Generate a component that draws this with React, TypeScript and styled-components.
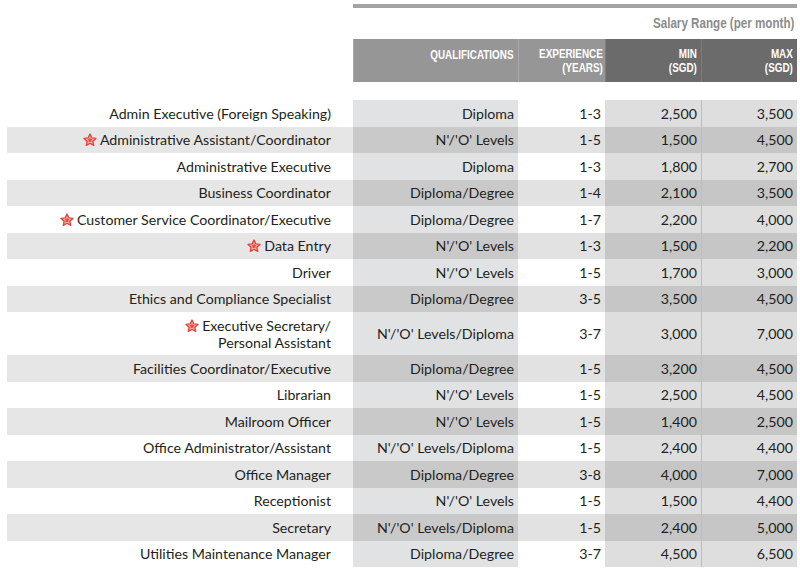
import React from "react";
import styled, { createGlobalStyle } from "styled-components";

const GlobalStyle = createGlobalStyle`
  html, body {
    margin: 0;
    padding: 0;
    background: #ffffff;
  }
  body {
    font-family: "Lato", "Noto Sans", sans-serif;
    color: #231f20;
  }
`;

const COLS = "346px 165px 87px 96px 96px";

type Job = {
  title: string;
  star?: boolean;
  qual: string;
  exp: string;
  min: string;
  max: string;
  tall?: boolean;
};

const jobs: Job[] = [
  { title: "Admin Executive (Foreign Speaking)", qual: "Diploma", exp: "1-3", min: "2,500", max: "3,500" },
  { title: "Administrative Assistant/Coordinator", star: true, qual: "N'/'O' Levels", exp: "1-5", min: "1,500", max: "4,500" },
  { title: "Administrative Executive", qual: "Diploma", exp: "1-3", min: "1,800", max: "2,700" },
  { title: "Business Coordinator", qual: "Diploma/Degree", exp: "1-4", min: "2,100", max: "3,500" },
  { title: "Customer Service Coordinator/Executive", star: true, qual: "Diploma/Degree", exp: "1-7", min: "2,200", max: "4,000" },
  { title: "Data Entry", star: true, qual: "N'/'O' Levels", exp: "1-3", min: "1,500", max: "2,200" },
  { title: "Driver", qual: "N'/'O' Levels", exp: "1-5", min: "1,700", max: "3,000" },
  { title: "Ethics and Compliance Specialist", qual: "Diploma/Degree", exp: "3-5", min: "3,500", max: "4,500" },
  { title: "Executive Secretary/\nPersonal Assistant", star: true, tall: true, qual: "N'/'O' Levels/Diploma", exp: "3-7", min: "3,000", max: "7,000" },
  { title: "Facilities Coordinator/Executive", qual: "Diploma/Degree", exp: "1-5", min: "3,200", max: "4,500" },
  { title: "Librarian", qual: "N'/'O' Levels", exp: "1-5", min: "2,500", max: "4,500" },
  { title: "Mailroom Officer", qual: "N'/'O' Levels", exp: "1-5", min: "1,400", max: "2,500" },
  { title: "Office Administrator/Assistant", qual: "N'/'O' Levels/Diploma", exp: "1-5", min: "2,400", max: "4,400" },
  { title: "Office Manager", qual: "Diploma/Degree", exp: "3-8", min: "4,000", max: "7,000" },
  { title: "Receptionist", qual: "N'/'O' Levels", exp: "1-5", min: "1,500", max: "4,400" },
  { title: "Secretary", qual: "N'/'O' Levels/Diploma", exp: "1-5", min: "2,400", max: "5,000" },
  { title: "Utilities Maintenance Manager", qual: "Diploma/Degree", exp: "3-7", min: "4,500", max: "6,500" },
];

type Kind = "title" | "qual" | "exp" | "min" | "max";

const shades: Record<Kind, [string, string]> = {
  title: ["#ffffff", "#e6e6e6"],
  qual: ["#e1e2e3", "#c9c9c9"],
  exp: ["#ffffff", "#e2e2e2"],
  min: ["#dedede", "#c6c6c6"],
  max: ["#dedede", "#c6c6c6"],
};

const Page = styled.div`
  width: 800px;
  height: 571px;
  padding-left: 7px;
  box-sizing: border-box;
  overflow: hidden;
`;

const Head = styled.div`
  display: grid;
  grid-template-columns: ${COLS};
`;

const TopRule = styled.div`
  grid-column: 2 / 6;
  height: 4px;
  margin-top: 4px;
  background: #a3a3a3;
`;

// condensed bold face, squeezed from Liberation Sans
const Narrow = styled.span<{ $squeeze?: number }>`
  display: inline-block;
  font-family: "Liberation Sans", Arial, sans-serif;
  font-weight: 700;
  transform: scaleX(${(p) => p.$squeeze ?? 0.76});
  transform-origin: right center;
  white-space: nowrap;
`;

const SalaryLabel = styled.div`
  grid-column: 2 / 6;
  box-sizing: border-box;
  height: 27px;
  padding: 6px 3px 0 0;
  text-align: right;
  font-size: 14px;
  line-height: 17px;
  color: #8c8c8c;
`;

const HeadCell = styled.div<{ $dark?: boolean }>`
  margin-top: 4px;
  height: 43px;
  box-sizing: border-box;
  padding: 8px 4px 0 0;
  text-align: right;
  background: ${(p) => (p.$dark ? "#6b6b6b" : "#969696")};
  border-left: 1px solid ${(p) => (p.$dark ? "#7d7d7d" : "#aaaaaa")};
  font-size: 13px;
  line-height: 14px;
  color: #ffffff;

  &:nth-child(3) {
    border-left: none;
  }
`;

const HeadBlank = styled.div`
  margin-top: 4px;
`;

const Body = styled.div`
  margin-top: 18px;
`;

const Row = styled.div<{ $tall?: boolean }>`
  display: grid;
  grid-template-columns: ${COLS};
  height: ${(p) => (p.$tall ? "43px" : "26.5px")};
`;

const Cell = styled.div<{ $kind: Kind; $even: boolean }>`
  display: flex;
  align-items: center;
  justify-content: flex-end;
  text-align: right;
  box-sizing: border-box;
  padding-right: ${(p) => (p.$kind === "title" ? "22px" : "4px")};
  background: ${(p) => shades[p.$kind][p.$even ? 1 : 0]};
  border-left: ${(p) => (p.$kind === "max" ? "1px solid #bdbdbd" : "none")};
  font-size: 14.2px;
  line-height: 17px;
  white-space: pre-line;
  color: #231f20;
`;

const TitleWrap = styled.span`
  display: inline-flex;
  align-items: flex-start;
  gap: 3px;
`;

const StarBox = styled.span`
  display: inline-flex;
  padding-top: 2px;
`;

const Star = () => (
  <StarBox>
    <svg width="14" height="14" viewBox="0 0 24 24">
      <path
        d="M12 1.8l3 6.6 7.2.8-5.4 4.9 1.5 7.1L12 17.6l-6.3 3.6 1.5-7.1L1.8 9.2 9 8.4z"
        fill="#f9c3bd"
        stroke="#e8413a"
        strokeWidth="2.4"
        strokeLinejoin="round"
      />
      <path
        d="M12 7.5l1.4 3 3.2.3-2.4 2.2.7 3.2L12 14.6l-2.9 1.6.7-3.2-2.4-2.2 3.2-.3z"
        fill="#e8413a"
      />
    </svg>
  </StarBox>
);

export default function App() {
  return (
    <>
      <GlobalStyle />
      <Page>
        <Head>
          <div />
          <TopRule />
          <div />
          <SalaryLabel>
            <Narrow $squeeze={0.83}>Salary Range (per month)</Narrow>
          </SalaryLabel>
          <HeadBlank />
          <HeadCell>
            <Narrow>QUALIFICATIONS</Narrow>
          </HeadCell>
          <HeadCell>
            <Narrow>
              EXPERIENCE
              <br />
              (YEARS)
            </Narrow>
          </HeadCell>
          <HeadCell $dark>
            <Narrow>
              MIN
              <br />
              (SGD)
            </Narrow>
          </HeadCell>
          <HeadCell $dark>
            <Narrow>
              MAX
              <br />
              (SGD)
            </Narrow>
          </HeadCell>
        </Head>
        <Body>
          {jobs.map((j, i) => {
            const even = i % 2 === 1;
            return (
              <Row key={j.title} $tall={j.tall}>
                <Cell $kind="title" $even={even}>
                  <TitleWrap>
                    {j.star && <Star />}
                    <span>{j.title}</span>
                  </TitleWrap>
                </Cell>
                <Cell $kind="qual" $even={even}>{j.qual}</Cell>
                <Cell $kind="exp" $even={even}>{j.exp}</Cell>
                <Cell $kind="min" $even={even}>{j.min}</Cell>
                <Cell $kind="max" $even={even}>{j.max}</Cell>
              </Row>
            );
          })}
        </Body>
      </Page>
    </>
  );
}
